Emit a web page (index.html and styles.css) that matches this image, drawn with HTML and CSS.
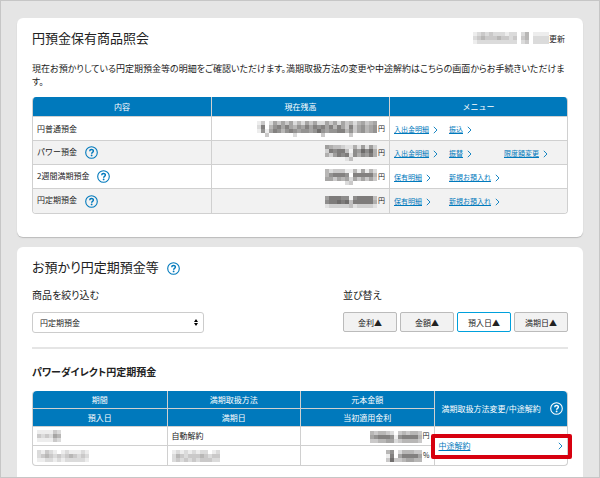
FILE: index.html
```html
<!DOCTYPE html>
<html lang="ja">
<head>
    <meta charset="UTF-8">
    <meta name="viewport" content="width=device-width, initial-scale=1.0">
    <title>円預金保有商品照会</title>
    <link rel="stylesheet" href="styles.css">
</head>
<body>
    <!-- アイコン -->
    <svg class="sprite" aria-hidden="true">
        <symbol id="help" viewBox="0 0 13 13">
            <circle cx="6.5" cy="6.5" r="5.8" fill="none" stroke="currentColor" stroke-width="1.1"/>
            <path d="M4.7 5.2C4.7 3 8.4 3 8.4 5.1C8.4 6.4 6.6 6.3 6.6 7.8" fill="none" stroke="currentColor" stroke-width="1.4"/>
            <circle cx="6.6" cy="9.4" r="0.9" fill="currentColor"/>
        </symbol>
        <symbol id="arrow" viewBox="0 0 5 8">
            <path d="M0.8 0.8L4 4L0.8 7.2" fill="none" stroke="currentColor" stroke-width="0.9"/>
        </symbol>
    </svg>

    <main>
        <section class="card">
            <div class="card-header">
                <h1>円預金保有商品照会</h1>
                <p class="updated"><span class="mosaic" data-rows="01232322212202401111,02343334332303402222,01222222222202302222"></span>更新</p>
            </div>
            <p class="lead">現在お預かりしている円定期預金等の明細をご確認いただけます。満期取扱方法の変更や中途解約はこちらの画面からお手続きいただけます。</p>

            <table class="accounts">
                <thead>
                    <tr><th>内容</th><th>現在残高</th><th>メニュー</th></tr>
                </thead>
                <tbody>
                    <tr>
                        <td>円普通預金</td>
                        <td class="amount"><span class="mosaic" data-rows="130253535242535225352534245345,270467575465757675747537356456,161576467656656865667746356456,003000000200000030000003000000"></span>円</td>
                        <td>
                            <div class="menu">
                                <a href="#">入出金明細<svg class="arrow"><use href="#arrow"/></svg></a>
                                <a href="#">振込<svg class="arrow"><use href="#arrow"/></svg></a>
                            </div>
                        </td>
                    </tr>
                    <tr>
                        <td>パワー預金<a href="#" class="help" aria-label="ヘルプ"><svg><use href="#help"/></svg></a></td>
                        <td class="amount"><span class="mosaic" data-rows="5433211415152,2767730658684,4257671646574,0000013000000"></span>円</td>
                        <td>
                            <div class="menu">
                                <a href="#">入出金明細<svg class="arrow"><use href="#arrow"/></svg></a>
                                <a href="#">振替<svg class="arrow"><use href="#arrow"/></svg></a>
                                <a href="#">限度額変更<svg class="arrow"><use href="#arrow"/></svg></a>
                            </div>
                        </td>
                    </tr>
                    <tr>
                        <td>2週間満期預金<a href="#" class="help" aria-label="ヘルプ"><svg><use href="#help"/></svg></a></td>
                        <td class="amount"><span class="mosaic" data-rows="4233311415142,4677760777774,5535452535353,0000023000000"></span>円</td>
                        <td>
                            <div class="menu">
                                <a href="#">保有明細<svg class="arrow"><use href="#arrow"/></svg></a>
                                <a href="#">新規お預入れ<svg class="arrow"><use href="#arrow"/></svg></a>
                            </div>
                        </td>
                    </tr>
                    <tr>
                        <td>円定期預金<a href="#" class="help" aria-label="ヘルプ"><svg><use href="#help"/></svg></a></td>
                        <td class="amount"><span class="mosaic" data-rows="5777660677773,6778783777774,1222223122221"></span>円</td>
                        <td>
                            <div class="menu">
                                <a href="#">保有明細<svg class="arrow"><use href="#arrow"/></svg></a>
                                <a href="#">新規お預入れ<svg class="arrow"><use href="#arrow"/></svg></a>
                            </div>
                        </td>
                    </tr>
                </tbody>
            </table>
        </section>

        <section class="card card-last">
            <h2>お預かり円定期預金等<a href="#" class="help" aria-label="ヘルプ"><svg><use href="#help"/></svg></a></h2>

            <div class="filters">
                <div class="filter">
                    <label for="product">商品を絞り込む</label>
                    <div class="select">
                        <select id="product">
                            <option>円定期預金</option>
                        </select>
                        <svg viewBox="0 0 4 7" aria-hidden="true"><path d="M2 0L4 3H0ZM2 7L0 4H4Z"/></svg>
                    </div>
                </div>
                <div class="sort" role="group" aria-labelledby="sort-label">
                    <p id="sort-label">並び替え</p>
                    <div class="sort-buttons">
                        <button type="button">金利▲</button>
                        <button type="button">金額▲</button>
                        <button type="button" class="active">預入日▲</button>
                        <button type="button">満期日▲</button>
                    </div>
                </div>
            </div>

            <h3>パワーダイレクト円定期預金</h3>

            <table class="deposits">
                <thead>
                    <tr>
                        <th>期間</th>
                        <th>満期取扱方法</th>
                        <th>元本金額</th>
                        <th rowspan="2">
                            <div class="th-help">満期取扱方法変更/中途解約<a href="#" class="help" aria-label="ヘルプ"><svg><use href="#help"/></svg></a></div>
                        </th>
                    </tr>
                    <tr><th>預入日</th><th>満期日</th><th>当初適用金利</th></tr>
                </thead>
                <tbody>
                    <tr>
                        <td><span class="mosaic" data-rows="111132,323254,111132"></span></td>
                        <td>自動解約</td>
                        <td class="amount"><span class="mosaic" data-rows="4344320343443,5677761677774,3344552344443"></span>円</td>
                        <td rowspan="2" class="action">
                            <a href="#">中途解約<svg class="arrow"><use href="#arrow"/></svg></a>
                        </td>
                    </tr>
                    <tr>
                        <td><span class="mosaic" data-rows="2132101211121,2343232343232,1122121222221"></span></td>
                        <td><span class="mosaic" data-rows="121212122012,243233343233,232323233322"></span></td>
                        <td class="amount"><span class="mosaic" data-rows="460244433,170577775,383345544"></span>%</td>
                    </tr>
                </tbody>
            </table>
        </section>
    </main>

    <script src="script.js"></script>
</body>
</html>
```
FILE: styles.css
```css
* {
    box-sizing: border-box;
}

body {
    margin: 0;
    font-family: "Noto Sans CJK JP", "Noto Sans", sans-serif;
    font-size: 8px;
    color: #222;
    background-color: #e5e5e5;
}

h1, h2, h3, p {
    margin: 0;
    font-weight: normal;
}

a {
    color: #0079bc;
}

.sprite {
    display: none;
}

main {
    display: flex;
    flex-direction: column;
    gap: 10px;
    min-height: 100vh;
    padding: 17px 16px 0;
    border: 1px solid #c6c6c6;
}

.card {
    padding: 10px 15px 23px;
    background-color: #fff;
    border-radius: 6px;
    box-shadow: 0 1px 1px #bbb;
}

.card-last {
    flex-grow: 1;
    padding-bottom: 10px;
    border-radius: 6px 6px 0 0;
    box-shadow: none;
}

.card-header {
    display: flex;
    justify-content: space-between;
    align-items: center;
    margin-bottom: 14px;
    padding-right: 3px;
}

h1, h2 {
    font-size: 13px;
    line-height: 20px;
}

.updated {
    display: flex;
    align-items: center;
}

.lead {
    margin-bottom: 9px;
    font-size: 9px;
    line-height: 13px;
    font-feature-settings: "palt";
}

/* 伏せ字 */
.mosaic {
    display: inline-block;
    vertical-align: middle;
}

.mosaic svg {
    display: block;
}

/* アイコン */
.help {
    display: inline-block;
    margin-left: 8px;
    vertical-align: middle;
}

.help svg {
    display: block;
    width: 13px;
    height: 13px;
}

h1, h2 {
    font-feature-settings: "palt";
}

.arrow {
    width: 5px;
    height: 8px;
    margin-left: 4px;
    vertical-align: middle;
}

/* テーブル */
table {
    width: 100%;
    table-layout: fixed;
    border-collapse: separate;
    border-spacing: 0;
    border: 1px solid #d0d0d0;
    border-top: 0;
    border-radius: 4px;
    overflow: hidden;
}

th, td {
    padding: 0 4px;
    border-left: 1px solid #d0d0d0;
    border-bottom: 1px solid #d0d0d0;
    line-height: 12px;
}

th:first-child, td:first-child {
    border-left: 0;
}

.deposits tr:nth-child(2) td:first-child, .deposits tr:nth-child(2) th:first-child {
    border-left: 0;
}

tbody tr:last-child td, td[rowspan] {
    border-bottom: 0;
}

th {
    color: #fff;
    font-weight: normal;
    background-color: #0079bc;
}

th .help {
    color: #fff;
}

td {
    text-align: left;
}

.amount {
    font-size: 7px;
    text-align: right;
}

.amount .mosaic {
    margin-right: 1px;
}

.accounts th {
    height: 20px;
}

.accounts td {
    height: 24px;
}

.accounts tbody tr:nth-child(even) {
    background-color: #f2f2f2;
}

.menu {
    display: grid;
    grid-template-columns: repeat(3, 1fr);
    padding-right: 4px;
    font-size: 7px;
    white-space: nowrap;
}

/* 絞り込み・並び替え */
.filters {
    display: flex;
    justify-content: space-between;
    margin-top: 11px;
    padding-bottom: 14px;
    border-bottom: 2px solid #e5e5e5;
}

.filter {
    width: 32%;
}

.filter label, .sort p {
    display: block;
    margin-bottom: 10px;
    font-size: 10px;
    line-height: 14px;
    font-feature-settings: "palt";
}

.select {
    position: relative;
}

.select select {
    display: block;
    width: 100%;
    height: 21px;
    padding: 0 7px;
    font-family: inherit;
    font-size: 8px;
    color: #222;
    background-color: #fff;
    border: 1px solid #ccc;
    border-radius: 3px;
    appearance: none;
}

.select svg {
    position: absolute;
    top: 7px;
    right: 6px;
    width: 4px;
    height: 7px;
    pointer-events: none;
}

.sort {
    width: 42%;
}

.sort-buttons {
    display: grid;
    grid-template-columns: repeat(4, 1fr);
    gap: 3px;
}

.sort-buttons button {
    height: 20px;
    padding: 0;
    font-family: inherit;
    font-size: 8px;
    color: #222;
    background-color: #f2f2f2;
    border: 1px solid #bbb;
    border-radius: 2px;
    cursor: pointer;
}

.sort-buttons .active {
    background-color: #fff;
    border-color: #00a0dc;
}

h3 {
    margin: 16px 0 12px;
    font-size: 10px;
    font-weight: bold;
    line-height: 14px;
    font-feature-settings: "palt";
}

.deposits th {
    height: 18px;
}

.deposits td {
    height: 19px;
}

.th-help {
    display: flex;
    justify-content: space-between;
    align-items: center;
    padding-left: 3px;
    white-space: nowrap;
}

/* 赤枠が表の外にはみ出すため */
.deposits {
    overflow: visible;
}

.deposits tr:first-child th:first-child {
    border-top-left-radius: 4px;
}

.deposits tr:first-child th:last-child {
    border-top-right-radius: 4px;
}

.action {
    position: relative;
}

.action a {
    display: flex;
    justify-content: space-between;
    align-items: center;
}

/* 強調の赤枠 */
.action::after {
    content: "";
    position: absolute;
    top: 7px;
    right: -5px;
    bottom: 6px;
    left: -4px;
    border: 4px solid #d7000f;
    border-radius: 2px;
    pointer-events: none;
}
```
FILE: script.js
```javascript
// data-rows の数字 (0-9) を濃さとして 4px 角のモザイクを描く
const SIZE = 4;

document.querySelectorAll('.mosaic').forEach(function(el) {
    const rows = el.dataset.rows.split(',');
    const width = rows[0].length * SIZE;
    const height = rows.length * SIZE;
    let rects = '';

    rows.forEach(function(row, y) {
        row.split('').forEach(function(level, x) {
            if (level === '0') return;
            rects += `<rect x="${x * SIZE}" y="${y * SIZE}" width="${SIZE}" height="${SIZE}" fill="#3a3836" fill-opacity="${level * 0.09}"/>`;
        });
    });

    el.innerHTML = `<svg width="${width}" height="${height}" aria-hidden="true">${rects}</svg>`;
});
```
